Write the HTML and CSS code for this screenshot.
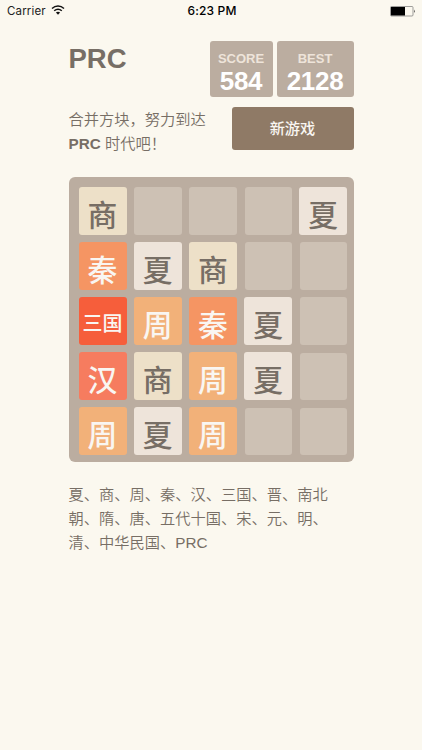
FILE: index.html
```html
<!DOCTYPE html>
<html lang="zh-CN">
<head>
<meta charset="utf-8">
<meta name="viewport" content="width=device-width">
<title>PRC</title>
<link rel="stylesheet" href="styles.css">
</head>
<body>
<div class="status">
  <div class="carrier"><span>Carrier</span>
    <svg class="wifi" width="14" height="10" viewBox="0 0 14 10" fill="none" stroke="#111" stroke-width="1.5"><path d="M1 3.500C4.500.3 9.500.3 13 3.500M3.200 5.800C5.400 3.900 8.600 3.900 10.800 5.800"/><path d="M4.900 7.500Q7 6 9.100 7.500L7 9.800Z" fill="#111" stroke="none"/></svg>
  </div>
  <div class="time">6:23 PM</div>
  <svg class="battery" width="26" height="11" viewBox="0 0 26 11"><rect x=".5" y=".5" width="22.500" height="9.500" rx="1" fill="none" stroke="#777" stroke-width=".7"/><rect x="1" y="1" width="14" height="8.500" fill="#000"/><path d="M24 3.500Q25.500 5.200 24 7Z" fill="#222"/></svg>
</div>
<main class="container">
  <header class="heading">
    <h1 class="title">PRC</h1>
    <div class="scores">
      <div class="score"><span class="label">SCORE</span><span class="value">584</span></div>
      <div class="score best"><span class="label">BEST</span><span class="value">2128</span></div>
    </div>
  </header>
  <section class="above-game">
    <p class="intro">合并方块，努力到达<br><strong>PRC</strong> 时代吧！</p>
    <a class="restart">新游戏</a>
  </section>
  <div class="board">
    <div class="tile shang"><span>商</span></div><div class="cell"></div><div class="cell"></div><div class="cell"></div><div class="tile xia"><span>夏</span></div>
    <div class="tile qin"><span>秦</span></div><div class="tile xia"><span>夏</span></div><div class="tile shang"><span>商</span></div><div class="cell"></div><div class="cell"></div>
    <div class="tile sanguo"><span>三国</span></div><div class="tile zhou"><span>周</span></div><div class="tile qin"><span>秦</span></div><div class="tile xia"><span>夏</span></div><div class="cell"></div>
    <div class="tile han"><span>汉</span></div><div class="tile shang"><span>商</span></div><div class="tile zhou"><span>周</span></div><div class="tile xia"><span>夏</span></div><div class="cell"></div>
    <div class="tile zhou"><span>周</span></div><div class="tile xia"><span>夏</span></div><div class="tile zhou"><span>周</span></div><div class="cell"></div><div class="cell"></div>
  </div>
  <p class="sequence">夏、商、周、秦、汉、三国、晋、南北<br>朝、隋、唐、五代十国、宋、元、明、<br>清、中华民国、PRC</p>
</main>
</body>
</html>
```
FILE: styles.css
```css
* { box-sizing: border-box; }
body {
  margin: 0;
  min-height: 750px;
  background: #fbf8ef;
  color: #776e65;
  font-family: "Liberation Sans", "Noto Sans CJK SC", sans-serif;
  overflow: hidden;
}
h1, p { margin: 0; }
.status {
  height: 22px;
  padding: 0 6px 0 7px;
  display: grid;
  grid-template-columns: 1fr auto 1fr;
  align-items: center;
  color: #222;
  font: 12px/22px Inter, sans-serif;
}
.carrier { display: flex; align-items: center; gap: 5px; }
.carrier span { font-size: 11.500px; letter-spacing: .15px; }
.wifi { margin-top: -2px; }
.time { color: #000; font-size: 12px; font-weight: 500; letter-spacing: .15px; padding-left: 1px; }
.battery { justify-self: end; }
.container { width: 285px; margin: 19px 0 0 68.500px; }
.heading { display: flex; justify-content: space-between; height: 56px; }
.title { font-size: 27.500px; line-height: 36px; font-weight: bold; }
.scores { display: flex; gap: 4px; }
.score {
  width: 63px;
  height: 56px;
  padding-top: 10px;
  border-radius: 3px;
  background: #bbada0;
  display: flex;
  flex-direction: column;
  align-items: center;
  font-weight: bold;
}
.best { width: 77px; }
.label { font-size: 13px; line-height: 15px; color: #eee4da; }
.value { font-size: 26px; line-height: 31px; color: #fff; letter-spacing: -.3px; }
.above-game { display: flex; justify-content: space-between; height: 53px; padding-top: 10px; }
.intro, .sequence { font-size: 15.250px; line-height: 24.400px; font-weight: 350; white-space: nowrap; }
.intro { padding-top: 1px; }
.intro strong { font-weight: bold; }
.restart {
  width: 122px;
  height: 43px;
  border-radius: 3px;
  background: #8f7a66;
  color: #f9f6f2;
  font-size: 15.250px;
  line-height: 43px;
  font-weight: 500;
  text-align: center;
}
.board {
  margin-top: 26.500px;
  height: 285px;
  padding: 10px 6px 6px 10px;
  border-radius: 6px;
  background: #bbada0;
  display: grid;
  grid-template-columns: repeat(5, 48px);
  grid-template-rows: repeat(5, 48px);
  gap: 7.200px;
}
.cell { margin: .5px 0 0 .5px; border-radius: 3px; background: #cdc1b4; }
.tile {
  border-radius: 3px;
  display: flex;
  align-items: center;
  justify-content: center;
  font-family: "Noto Sans CJK SC", sans-serif;
  font-size: 29.800px;
  line-height: 48px;
  font-weight: 500;
}
.tile span { padding-top: 4px; }
.xia { background: #eee4da; }
.shang { background: #ede0c8; }
.zhou, .qin, .han, .sanguo { color: #f9f6f2; }
.zhou { background: #f2b179; }
.qin { background: #f59563; }
.han { background: #f67c5f; }
.sanguo { background: #f65e3b; font-size: 20px; }
.sequence { margin-top: 21px; }
```
